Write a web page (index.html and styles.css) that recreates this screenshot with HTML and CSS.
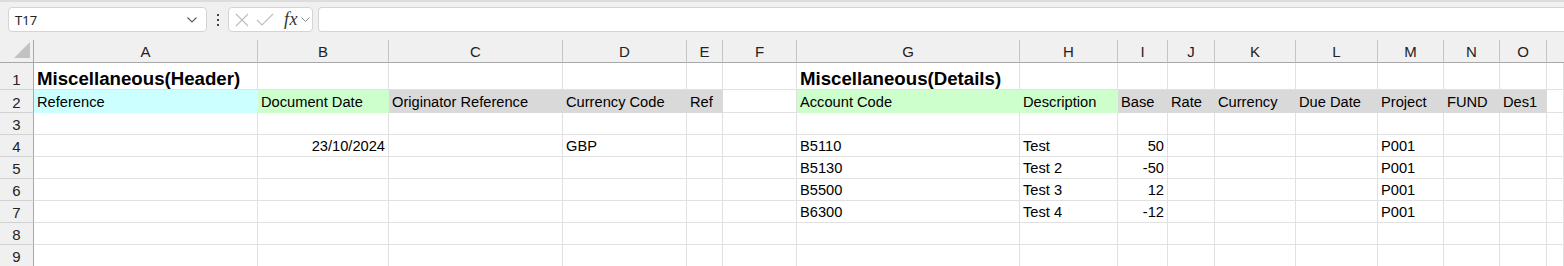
FILE: index.html
```html
<!DOCTYPE html>
<html>
<head>
<meta charset="utf-8">
<link rel="stylesheet" href="styles.css">
</head>
<body>
<div class="app">
  <div class="toolbar">
    <div class="namebox">
      <span class="name">T17</span>
      <svg class="chev" width="10" height="6" viewBox="0 0 10 6"><path d="M0.5 0.5 L5 5 L9.5 0.5" fill="none" stroke="#5a5a5a" stroke-width="1.1"/></svg>
    </div>
    <div class="more">
      <svg width="4" height="12" viewBox="0 0 4 12"><rect x="1" y="0" width="2" height="2" fill="#444"/><rect x="1" y="5" width="2" height="2" fill="#444"/><rect x="1" y="10" width="2" height="2" fill="#444"/></svg>
    </div>
    <div class="fxbox">
      <svg class="ic-x" width="14" height="14" viewBox="0 0 14 14"><path d="M1 1 L13 13 M13 1 L1 13" stroke="#bdbdbd" stroke-width="1.1" fill="none"/></svg>
      <svg class="ic-ok" width="18" height="14" viewBox="0 0 18 14"><path d="M1 7 L6 12 L17 1" stroke="#bdbdbd" stroke-width="1.1" fill="none"/></svg>
      <span class="fx">fx</span>
      <svg class="chev2" width="9" height="6" viewBox="0 0 9 6"><path d="M0.5 0.5 L4.5 4.5 L8.5 0.5" fill="none" stroke="#8a8a8a" stroke-width="1"/></svg>
    </div>
    <div class="formula"></div>
  </div>
  <div class="sheet">
    <div class="corner"><svg width="16" height="16" viewBox="0 0 16 16"><path d="M16 0 L16 16 L0 16 Z" fill="#c2c2c2"/></svg></div>
    <div class="ch">A</div><div class="ch">B</div><div class="ch">C</div><div class="ch">D</div><div class="ch">E</div><div class="ch">F</div><div class="ch">G</div><div class="ch">H</div><div class="ch">I</div><div class="ch">J</div><div class="ch">K</div><div class="ch">L</div><div class="ch">M</div><div class="ch">N</div><div class="ch">O</div><div class="ch last"></div>

    <div class="rh">1</div>
    <div class="c title">Miscellaneous(Header)</div><div class="c"></div><div class="c"></div><div class="c"></div><div class="c"></div><div class="c"></div>
    <div class="c title">Miscellaneous(Details)</div><div class="c"></div><div class="c"></div><div class="c"></div><div class="c"></div><div class="c"></div><div class="c"></div><div class="c"></div><div class="c"></div><div class="c"></div>

    <div class="rh">2</div>
    <div class="c cyan">Reference</div><div class="c green">Document Date</div><div class="c grey">Originator Reference</div><div class="c grey">Currency Code</div><div class="c grey">Ref</div><div class="c"></div>
    <div class="c green">Account Code</div><div class="c green">Description</div><div class="c grey">Base</div><div class="c grey">Rate</div><div class="c grey">Currency</div><div class="c grey">Due Date</div><div class="c grey">Project</div><div class="c grey">FUND</div><div class="c grey">Des1</div><div class="c"></div>

    <div class="rh">3</div>
    <div class="c"></div><div class="c"></div><div class="c"></div><div class="c"></div><div class="c"></div><div class="c"></div><div class="c"></div><div class="c"></div><div class="c"></div><div class="c"></div><div class="c"></div><div class="c"></div><div class="c"></div><div class="c"></div><div class="c"></div><div class="c"></div>

    <div class="rh">4</div>
    <div class="c"></div><div class="c num">23/10/2024</div><div class="c"></div><div class="c">GBP</div><div class="c"></div><div class="c"></div><div class="c">B5110</div><div class="c">Test</div><div class="c num">50</div><div class="c"></div><div class="c"></div><div class="c"></div><div class="c">P001</div><div class="c"></div><div class="c"></div><div class="c"></div>

    <div class="rh">5</div>
    <div class="c"></div><div class="c"></div><div class="c"></div><div class="c"></div><div class="c"></div><div class="c"></div><div class="c">B5130</div><div class="c">Test 2</div><div class="c num">-50</div><div class="c"></div><div class="c"></div><div class="c"></div><div class="c">P001</div><div class="c"></div><div class="c"></div><div class="c"></div>

    <div class="rh">6</div>
    <div class="c"></div><div class="c"></div><div class="c"></div><div class="c"></div><div class="c"></div><div class="c"></div><div class="c">B5500</div><div class="c">Test 3</div><div class="c num">12</div><div class="c"></div><div class="c"></div><div class="c"></div><div class="c">P001</div><div class="c"></div><div class="c"></div><div class="c"></div>

    <div class="rh">7</div>
    <div class="c"></div><div class="c"></div><div class="c"></div><div class="c"></div><div class="c"></div><div class="c"></div><div class="c">B6300</div><div class="c">Test 4</div><div class="c num">-12</div><div class="c"></div><div class="c"></div><div class="c"></div><div class="c">P001</div><div class="c"></div><div class="c"></div><div class="c"></div>

    <div class="rh">8</div>
    <div class="c"></div><div class="c"></div><div class="c"></div><div class="c"></div><div class="c"></div><div class="c"></div><div class="c"></div><div class="c"></div><div class="c"></div><div class="c"></div><div class="c"></div><div class="c"></div><div class="c"></div><div class="c"></div><div class="c"></div><div class="c"></div>

    <div class="rh">9</div>
    <div class="c"></div><div class="c"></div><div class="c"></div><div class="c"></div><div class="c"></div><div class="c"></div><div class="c"></div><div class="c"></div><div class="c"></div><div class="c"></div><div class="c"></div><div class="c"></div><div class="c"></div><div class="c"></div><div class="c"></div><div class="c"></div>
  </div>
</div>
</body>
</html>
```
FILE: styles.css
```css
* { box-sizing: border-box; }
html, body { margin: 0; padding: 0; background: #ffffff; }
body { width: 1564px; height: 266px; overflow: hidden; font-family: "Liberation Sans", Arial, sans-serif; color: #000; }

.app { display: flex; flex-direction: column; }

.toolbar {
  height: 40px;
  background: #f0f0f0;
  border-top: 2px solid #dcdcdc;
  display: flex;
  align-items: flex-start;
  padding: 5px 0 0 8px;
}
.namebox {
  width: 199px; height: 25px;
  background: #fff;
  border: 1px solid #d4d4d4;
  border-radius: 4px;
  display: flex; align-items: center; justify-content: space-between;
  padding: 0 9px 0 6px;
}
.name { font-family: "Noto Sans", "Open Sans", sans-serif; font-size: 13px; color: #222; }
.chev { margin-top: 1px; }
.more { width: 21px; height: 25px; display: flex; align-items: center; justify-content: center; }
.more svg { margin-top: 1px; }
.fxbox {
  width: 85px; height: 25px;
  background: #fff;
  border: 1px solid #d4d4d4;
  border-radius: 4px;
  display: flex; align-items: center;
  padding: 0 0 0 6px;
}
.ic-x { margin-right: 7px; }
.ic-ok { margin-right: 10px; }
.fx { font-family: "Liberation Serif", "Times New Roman", serif; font-style: italic; font-size: 18px; color: #333; margin-right: 3px; letter-spacing: 0.5px; line-height: 1; margin-top: -2px; }
.chev2 { margin-top: 1px; }
.formula {
  margin-left: 5px;
  flex: 1;
  height: 25px;
  background: #fff;
  border: 1px solid #d4d4d4;
  border-right: none;
  border-radius: 4px 0 0 4px;
}

.sheet {
  display: grid;
  grid-template-columns: 34px 224px 131px 174px 124px 36px 74px 223px 98px 50px 47px 81px 82px 66px 56px 47px 1fr;
  grid-template-rows: 23px 27px 23px repeat(7, 22px);
  font-size: 14.67px;
}
.corner {
  background: #f0f0f0;
  border-right: 1px solid #a8a8a8;
  border-bottom: 1px solid #a8a8a8;
  display: flex; align-items: flex-end; justify-content: flex-end;
  padding: 0 3px 4px 0;
}
.ch {
  background: #f0f0f0;
  border-bottom: 1px solid #a8a8a8;
  border-right: 1px solid #c4c4c4;
  display: flex; align-items: center; justify-content: center;
  font-size: 15px; color: #222;
  padding-top: 1px;
}
.ch.last { border-right: none; }
.rh {
  background: #f0f0f0;
  border-right: 1px solid #a8a8a8;
  border-bottom: 1px solid #d2d2d2;
  display: flex; align-items: flex-end; justify-content: center;
  font-size: 15px; color: #222;
  padding-bottom: 1px;
}
.c {
  border-right: 1px solid #e1e1e1;
  border-bottom: 1px solid #e1e1e1;
  display: flex; align-items: flex-end;
  padding: 0 3px 1px 3px;
  white-space: nowrap;
  overflow: visible;
  line-height: 1.15;
}
.c.num { justify-content: flex-end; }
.c.title { font-weight: bold; font-size: 18.67px; padding-bottom: 0; }
.c.cyan { background: #ccffff; border-color: #ccffff; }
.c.green { background: #ccffcc; border-color: #ccffcc; }
.c.grey { background: #d9d9d9; border-color: #d9d9d9; }
```
